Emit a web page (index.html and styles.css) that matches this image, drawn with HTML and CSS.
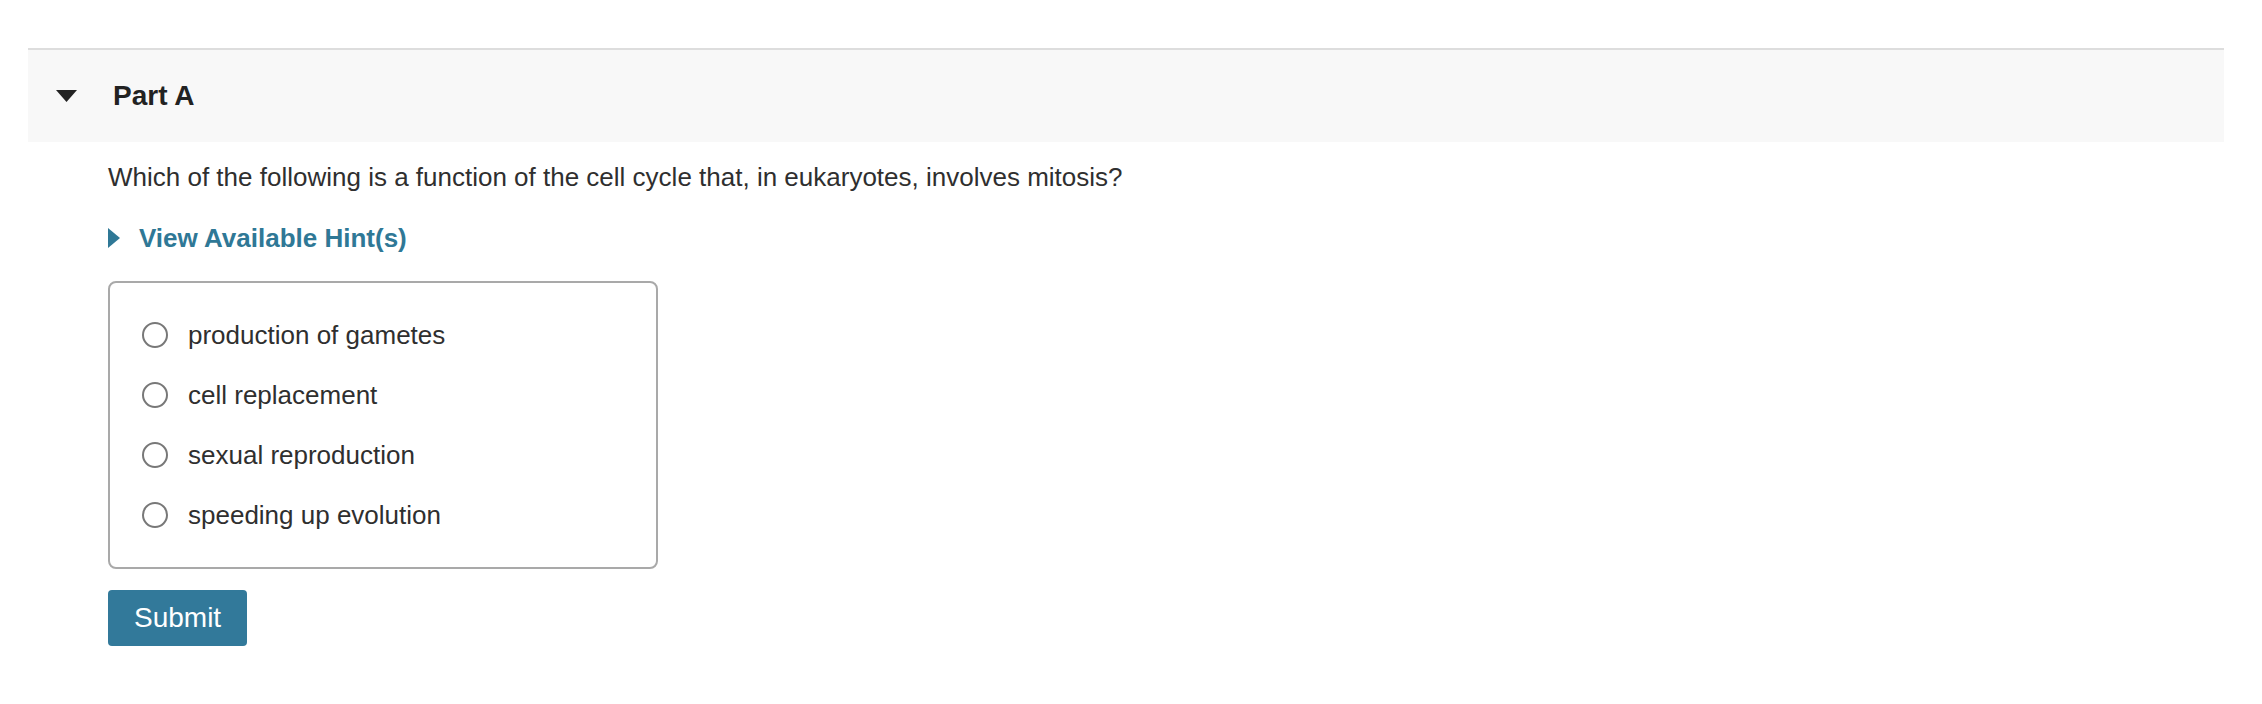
FILE: index.html
```html
<!DOCTYPE html>
<html lang="en">
<head>
<meta charset="utf-8">
<title>Part A</title>
<link rel="stylesheet" href="styles.css">
</head>
<body>
<section class="part">
  <div class="part-header">
    <svg class="caret-down" width="21" height="12" viewBox="0 0 21 12"><polygon points="0,0 21,0 10.5,12" fill="#222"/></svg>
    <h2 class="part-title">Part A</h2>
  </div>
  <div class="part-body">
    <p class="question">Which of the following is a function of the cell cycle that, in eukaryotes, involves mitosis?</p>
    <div class="hint">
      <svg class="caret-right" width="12" height="20" viewBox="0 0 12 20"><polygon points="0,0 12,10 0,20" fill="#2f7896"/></svg>
      <span class="hint-label">View Available Hint(s)</span>
    </div>
    <div class="choices">
      <label class="choice"><span class="radio"></span><span class="choice-text">production of gametes</span></label>
      <label class="choice"><span class="radio"></span><span class="choice-text">cell replacement</span></label>
      <label class="choice"><span class="radio"></span><span class="choice-text">sexual reproduction</span></label>
      <label class="choice"><span class="radio"></span><span class="choice-text">speeding up evolution</span></label>
    </div>
    <button class="submit" type="button">Submit</button>
  </div>
</section>
</body>
</html>
```
FILE: styles.css
```css
html, body {
  margin: 0;
  padding: 0;
  background: #ffffff;
}

body {
  font-family: "Liberation Sans", Arial, Helvetica, sans-serif;
  color: #333333;
}

.part {
  margin: 48px 38px 0 28px;
}

.part-header {
  display: flex;
  align-items: center;
  height: 92px;
  box-sizing: content-box;
  border-top: 2px solid #dddddd;
  background: #f8f8f8;
  padding-left: 28px;
}

.caret-down {
  display: block;
  flex: none;
}

.part-title {
  margin: 0 0 0 36px;
  font-size: 28px;
  line-height: 36px;
  font-weight: bold;
  color: #222222;
}

.part-body {
  padding-left: 80px;
  display: flex;
  flex-direction: column;
  align-items: flex-start;
}

.question {
  margin: 17px 0 0 0;
  font-size: 26px;
  line-height: 36px;
  color: #2f2f2f;
}

.hint {
  display: flex;
  align-items: center;
  margin-top: 25px;
  height: 36px;
}

.caret-right {
  display: block;
  flex: none;
}

.hint-label {
  margin-left: 19px;
  font-size: 26px;
  line-height: 36px;
  font-weight: bold;
  color: #2f7896;
}

.choices {
  margin-top: 25px;
  width: 550px;
  height: 288px;
  box-sizing: border-box;
  border: 2px solid #a9a9a9;
  border-radius: 8px;
  padding: 22px 32px;
  display: flex;
  flex-direction: column;
}

.choice {
  display: flex;
  align-items: center;
  height: 60px;
}

.radio {
  flex: none;
  width: 26px;
  height: 26px;
  box-sizing: border-box;
  border: 2px solid #787878;
  border-radius: 50%;
  background: #ffffff;
}

.choice-text {
  margin-left: 20px;
  font-size: 26px;
  line-height: 36px;
  color: #2f2f2f;
}

.submit {
  margin-top: 21px;
  height: 56px;
  padding: 0 26px;
  border: none;
  border-radius: 4px;
  background: #32799a;
  color: #ffffff;
  font-family: "Liberation Sans", Arial, Helvetica, sans-serif;
  font-size: 28px;
  line-height: 56px;
}
```
